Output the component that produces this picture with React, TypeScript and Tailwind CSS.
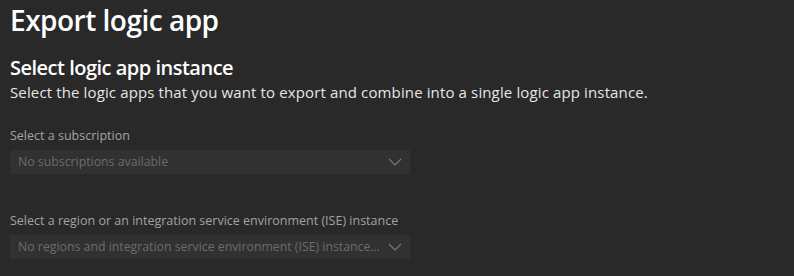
const font = { fontFamily: '"Open Sans", "Noto Sans", sans-serif' };

function Chevron() {
  return (
    <svg width="14" height="8" viewBox="0 0 14 8" fill="none" className="shrink-0">
      <path d="M1 1l6 6 6-6" stroke="#7a7a7a" strokeWidth="1.1" />
    </svg>
  );
}

function Dropdown({ label, placeholder }: { label: string; placeholder: string }) {
  return (
    <div className="flex flex-col">
      <label className="text-[12.5px] leading-[18px] text-[#a3a3a3]">{label}</label>
      <div className="mt-[5px] flex h-[24px] w-[400px] items-center justify-between gap-[6px] bg-[#313131] pl-[8px] pr-[8px]">
        <span className="truncate text-[12.3px] leading-[18px] text-[#6c6c6c]">{placeholder}</span>
        <Chevron />
      </div>
    </div>
  );
}

export default function App() {
  return (
    <div style={font} className="h-[276px] w-[794px] overflow-hidden bg-[#292929] pl-[10px] pt-[2px]">
      <h1 className="text-[28px] font-semibold leading-[36px] tracking-[-0.5px] text-white">Export logic app</h1>
      <h2 className="mt-[16px] text-[20px] font-semibold leading-[28px] tracking-[-0.5px] text-white">
        Select logic app instance
      </h2>
      <p className="text-[15px] leading-[20px] tracking-[0.13px] text-[#e6e6e6]">
        Select the logic apps that you want to export and combine into a single logic app instance.
      </p>
      <div className="mt-[25px] flex flex-col gap-[38px]">
        <Dropdown label="Select a subscription" placeholder="No subscriptions available" />
        <Dropdown
          label="Select a region or an integration service environment (ISE) instance"
          placeholder="No regions and integration service environment (ISE) instances available"
        />
      </div>
    </div>
  );
}
